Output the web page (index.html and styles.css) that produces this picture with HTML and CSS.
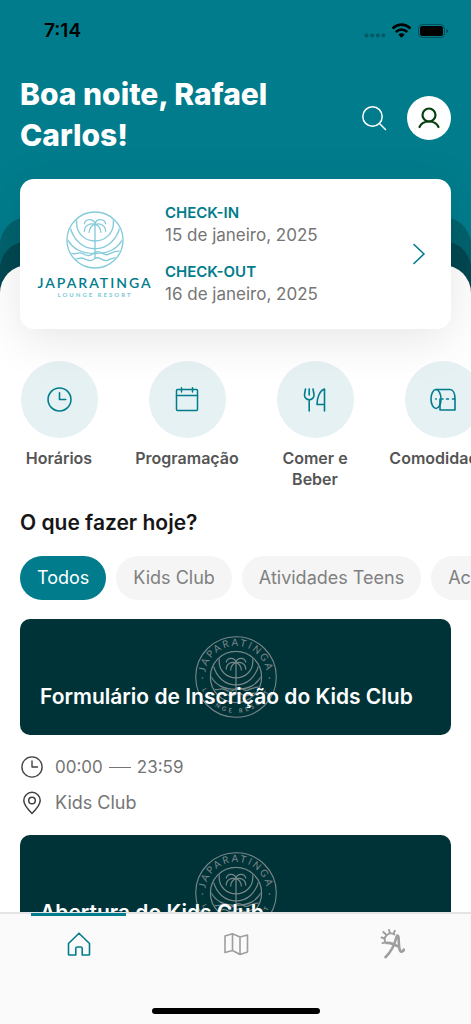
FILE: index.html
```html
<!DOCTYPE html>
<html lang="pt-BR">
<head>
<meta charset="utf-8">
<meta name="viewport" content="width=device-width, initial-scale=1">
<title>Japaratinga Lounge Resort</title>
<link rel="stylesheet" href="styles.css">
</head>
<body>
<svg class="defs" aria-hidden="true">
  <defs>
    <clipPath id="disc"><circle cx="30" cy="30" r="28"/></clipPath>
    <symbol id="palm" viewBox="0 0 60 60">
      <g fill="none" stroke="currentColor" stroke-width="1.4" stroke-linecap="round">
        <circle cx="30" cy="30" r="29"/>
        <path d="M30 12V49"/>
        <path d="M30 13C28 7 20 8 19 13M30 13C32 7 40 8 41 13M30 14C25 12 19 15 19 21M30 14C35 12 41 15 41 21M30 14C27 14 24 18 24 22M30 14C33 14 36 18 36 22"/>
        <g clip-path="url(#disc)">
          <path d="M11 6V13A19 18 0 0 0 49 13V6M4 16C8 31 18 39 30 39S52 31 56 16M0 27C7 40 16 44 30 44S53 40 60 27"/>
          <path d="M2 42C8 48 12 41 17 44S25 47 30 43C36 39 38 47 43 45S52 40 58 42M4 49C10 52 14 47 18 49S26 53 30 49C35 46 38 53 43 51S50 47 56 49"/>
        </g>
      </g>
    </symbol>
    <symbol id="clock" viewBox="0 0 24 24">
      <g fill="none" stroke="currentColor" stroke-width="1.5" stroke-linecap="round" stroke-linejoin="round"><circle cx="12" cy="12" r="11"/><path d="M12 5.500V12H18"/></g>
    </symbol>
    <symbol id="seal" viewBox="0 0 82 82">
      <circle cx="41" cy="41" r="40.300" fill="none" stroke="currentColor" stroke-width="1.100"/>
      <path id="seal-top" d="M10.400 46A31 31 0 1 1 71.600 46" fill="none"/>
      <path id="seal-bottom" d="M5 41A36 36 0 0 0 77 41" fill="none"/>
      <use href="#palm" x="14.500" y="14.500" width="53" height="53"/>
      <text class="seal-text" text-anchor="middle"><textPath href="#seal-top" startOffset="50%">JAPARATINGA</textPath></text>
      <text class="seal-text seal-text-small" text-anchor="middle"><textPath href="#seal-bottom" startOffset="50%">LOUNGE RESORT</textPath></text>
      <circle cx="7.500" cy="42" r=".8" fill="currentColor"/><circle cx="74.500" cy="42" r=".8" fill="currentColor"/>
    </symbol>
  </defs>
</svg>
<div class="app">
  <main class="content">
    <section class="hero">
      <div class="status">
        <span class="status-time">7:14</span>
        <svg class="status-icons" width="86" height="18" viewBox="0 0 86 18" aria-hidden="true">
          <g fill="#000" fill-opacity=".28"><circle cx="3.500" cy="13.500" r="2"/><circle cx="9.200" cy="13.500" r="2"/><circle cx="14.800" cy="13.500" r="2"/><circle cx="20.400" cy="13.500" r="2"/></g>
          <g fill="none" stroke="#000" stroke-width="2.600"><path d="M29.500 6.500Q38.500-1.200 47.500 6.500M32.800 10Q38.500 5 44.200 10"/></g>
          <path d="M38.500 15.800L35.400 12.700Q38.500 10 41.600 12.700Z"/>
          <rect x="55.500" y="2.500" width="26" height="13" rx="4" fill="none" stroke="#000" stroke-opacity=".35"/>
          <rect x="57" y="4" width="23" height="10" rx="2.500"/>
          <path d="M83.500 7v4q1.500-.5 1.500-2t-1.500-2" fill-opacity=".45"/>
        </svg>
      </div>
      <header class="header">
        <h1 class="greeting">Boa noite, Rafael Carlos!</h1>
        <button class="search" type="button" aria-label="Buscar">
          <svg width="26" height="26" viewBox="0 0 26 26" fill="none" stroke="currentColor" stroke-width="1.500" stroke-linecap="round"><circle cx="11.500" cy="11.500" r="9.700"/><path d="M18.500 18.500L24.500 24.500"/></svg>
        </button>
        <button class="profile" type="button" aria-label="Perfil">
          <svg width="24" height="24" viewBox="0 0 24 24" fill="none" stroke="currentColor" stroke-width="2.200" stroke-linecap="round"><circle cx="12" cy="9" r="6.500"/><path d="M2.500 21C4 17.500 7.500 15.500 12 15.500S20 17.500 21.500 21"/></svg>
        </button>
      </header>
      <a class="stay" href="#estadia">
        <span class="brand">
          <svg class="brand-mark" width="58" height="58" aria-hidden="true"><use href="#palm"/></svg>
          <span class="brand-name">JAPARATINGA</span>
          <span class="brand-tag">LOUNGE RESORT</span>
        </span>
        <span class="dates">
          <span class="date"><b class="date-label">CHECK-IN</b><span class="date-value">15 de janeiro, 2025</span></span>
          <span class="date"><b class="date-label">CHECK-OUT</b><span class="date-value">16 de janeiro, 2025</span></span>
        </span>
        <svg class="chevron" width="12" height="22" viewBox="0 0 12 22" fill="none" stroke="currentColor" stroke-width="1.600" stroke-linecap="round" stroke-linejoin="round" aria-hidden="true"><path d="M1 1.500L11 11L1 20.500"/></svg>
      </a>
      <div class="wave wave-mid"><div class="wave wave-deep"><div class="sheet">
        <nav class="shortcuts" aria-label="Atalhos">
          <a class="shortcut" href="#horarios"><span class="bubble"><svg width="25" height="25"><use href="#clock"/></svg></span><span class="shortcut-label">Horários</span></a>
          <a class="shortcut" href="#programacao"><span class="bubble"><svg width="24" height="26" viewBox="0 0 24 26" fill="none" stroke="currentColor" stroke-width="1.500" stroke-linecap="round" stroke-linejoin="round"><rect x="1.500" y="2.500" width="21" height="21" rx="1"/><path d="M1.500 8.500H22.500M6.500 .8V5M17.500 .8V5"/></svg></span><span class="shortcut-label">Programação</span></a>
          <a class="shortcut" href="#comer"><span class="bubble"><svg width="24" height="26" viewBox="0 0 24 26" fill="none" stroke="currentColor" stroke-width="1.600" stroke-linecap="round" stroke-linejoin="round"><path d="M2.500 2L1.500 7.500C1 14.500 11.500 14.500 11 7.500L10 2M6.200 2V8M6.200 13V24M21.500 24V2C17 3.500 14 10 14 17.500H21.500"/></svg></span><span class="shortcut-label">Comer e Beber</span></a>
          <a class="shortcut" href="#comodidades"><span class="bubble"><svg width="28" height="26" viewBox="0 0 28 26" fill="none" stroke="currentColor" stroke-width="1.600" stroke-linecap="round" stroke-linejoin="round"><ellipse cx="7" cy="12" rx="5" ry="9.500"/><path d="M7 2.500H21C24 2.500 26 6.500 26 12V23H11V12M13 12H14M17.500 12H19.500M23.500 12H26M7 11.800V12.200"/></svg></span><span class="shortcut-label">Comodidades</span></a>
        </nav>
        <section class="today">
          <h2 class="today-title">O que fazer hoje?</h2>
          <div class="chips">
            <button class="chip chip-active" type="button">Todos</button>
            <button class="chip" type="button">Kids Club</button>
            <button class="chip" type="button">Atividades Teens</button>
            <button class="chip" type="button">Academia</button>
          </div>
          <div class="events">
            <article class="event">
              <div class="banner"><svg class="seal" width="82" height="82" aria-hidden="true"><use href="#seal"/></svg><h3 class="banner-title">Formulário de Inscrição do Kids Club</h3></div>
              <div class="meta"><svg width="24" height="22" aria-hidden="true"><use href="#clock"/></svg><span class="hours">00:00 <i class="dash"></i> 23:59</span></div>
              <div class="meta"><svg width="24" height="24" viewBox="0 0 24 24" fill="none" stroke="currentColor" stroke-width="1.500" stroke-linejoin="round" aria-hidden="true"><path d="M12 22.500C8 18.500 3.800 14 3.800 9.500A8.200 8.200 0 0 1 20.200 9.500C20.200 14 16 18.500 12 22.500Z"/><circle cx="12" cy="9.500" r="3.300"/></svg><span>Kids Club</span></div>
            </article>
            <article class="event">
              <div class="banner"><svg class="seal" width="82" height="82" aria-hidden="true"><use href="#seal"/></svg><h3 class="banner-title">Abertura do Kids Club</h3></div>
            </article>
          </div>
        </section>
      </div></div></div>
    </section>
  </main>
  <nav class="tabs" aria-label="Principal">
    <a class="tab tab-active" href="#inicio" aria-label="Início"><svg width="24" height="24" viewBox="0 0 24 24" fill="none" stroke="currentColor" stroke-width="1.600" stroke-linejoin="round"><path d="M12 1.200L22.500 11.500V22.200Q22.500 23 21.700 23H15.200V16.500Q15.200 15 13.700 15H10.300Q8.800 15 8.800 16.500V23H2.300Q1.500 23 1.500 22.200V11.500Z"/></svg></a>
    <a class="tab" href="#mapa" aria-label="Mapa"><svg width="26" height="24" viewBox="0 0 26 24" fill="none" stroke="currentColor" stroke-width="1.600" stroke-linejoin="round"><path d="M2 4L9.500 1.800L17 5L24.500 3V20L17 22.500L9.500 18.500L2 20.500ZM9.500 1.800V18.500M17 5V22.500"/></svg></a>
    <a class="tab" href="#amarante" aria-label="Amarante"><svg width="26" height="30" viewBox="0 0 26 30" fill="none" stroke="currentColor" stroke-linecap="round" stroke-linejoin="round"><path stroke-width="2.600" d="M5.500 28.200C11 23 15 14 16.500 8Q17.600 5 18.500 8C19 13 18.500 24 22 22.500Q24 22 23.700 20.500M6.500 14C9 13.500 13 14.500 19 18"/><path stroke-width="1.900" d="M5.500 13.500C2.500 7.500 9 2.200 14.500 5.500M5 13.500L2.500 14.200M4.800 9.500L1.500 8.500M6.500 6L3.300 3M10 4.300L9 1M13.500 4.800L14.800 1.800"/></svg></a>
    <span class="home-bar"></span>
  </nav>
</div>
</body>
</html>
```
FILE: styles.css
```css
* { box-sizing: border-box; }
body { margin: 0; font-family: Inter, "Noto Sans", sans-serif; color: #757575; background: #fff; }
a { color: inherit; text-decoration: none; }
button { border: 0; padding: 0; background: none; font: inherit; color: inherit; cursor: pointer; }
svg { display: block; flex: none; }
h1, h2, h3 { margin: 0; }
.defs { position: absolute; width: 0; height: 0; }

.app { display: flex; flex-direction: column; height: 100vh; overflow: hidden; }
.content { flex: 1; min-height: 0; overflow: hidden auto; scrollbar-width: none; }

.hero { background: #007c8c; }
.status { display: flex; align-items: center; justify-content: space-between; height: 60px; padding: 2px 22px 0 44px; }
.status-time { color: #000; font-size: 19px; font-weight: 600; line-height: 24px; }
.header { display: flex; align-items: center; padding: 14px 20px 18px; }
.greeting { flex: 1; padding: 0 72px 5px 0; color: #fff; font-size: 30px; font-weight: 800; line-height: 41px; }
.search { color: #fff; margin-right: 20px; }
.profile { display: grid; place-items: center; width: 44px; height: 44px; border-radius: 50%; background: #fff; color: #06400f; }

.stay { position: relative; z-index: 1; display: flex; align-items: center; min-height: 150px; margin: 0 20px -112px; padding: 0 26px 0 18px; border-radius: 14px; background: #fff; box-shadow: 0 10px 48px rgba(0, 0, 0, .1); }
.brand { display: flex; flex-direction: column; align-items: center; width: 114px; margin-right: 13px; }
.brand-mark { color: #85cbd9; }
.brand-name { margin-top: 5px; color: #007c8c; font-family: Lato, sans-serif; font-size: 14px; font-weight: 600; line-height: 18px; letter-spacing: 2px; }
.brand-tag { color: #85cbd9; font-family: Lato, sans-serif; font-size: 6px; font-weight: 900; line-height: 6px; letter-spacing: 2px; }
.dates { display: flex; flex: 1; flex-direction: column; gap: 15px; padding-bottom: 1px; }
.date { display: flex; flex-direction: column; }
.date-label { color: #007c8c; font-size: 15px; font-weight: 600; line-height: 22px; }
.date-value { font-size: 17px; line-height: 22px; }
.chevron { color: #007c8c; }

.wave { padding-top: 24px; border-radius: 28px 28px 0 0; }
.wave-mid { background: #00626d; }
.wave-deep { background: #004751; }
.sheet { padding: 96px 0 20px; border-radius: 28px 28px 0 0; background: #fff; }

.shortcuts { display: flex; gap: 10px; overflow: hidden; }
.shortcut { display: flex; flex: none; flex-direction: column; align-items: center; gap: 10px; width: 118px; color: #555; font-size: 16px; font-weight: 600; line-height: 21px; text-align: center; }
.bubble { display: grid; place-items: center; width: 77px; height: 77px; border-radius: 50%; background: #e5f1f3; color: #007c8c; }
.shortcut-label { max-width: 108px; }

.today { padding: 20px 0 0 20px; }
.today-title { color: #161616; font-size: 21px; font-weight: 600; line-height: 26px; }
.chips { display: flex; gap: 10px; margin-top: 20px; overflow: hidden; }
.chip { flex: none; padding: 0 17px; border-radius: 22px; background: #f5f5f5; color: #808080; font-size: 18px; line-height: 44px; }
.chip-active { background: #007c8c; color: #fff; }

.events { display: flex; flex-direction: column; gap: 20px; margin-top: 19px; padding-right: 20px; }
.event { display: flex; flex-direction: column; gap: 12px; }
.banner { position: relative; display: flex; align-items: flex-end; min-height: 116px; margin-bottom: 8px; padding: 20px 20px 25px; border-radius: 10px; background: #003338; }
.seal { position: absolute; top: 50%; left: 50%; transform: translate(-50%, -50%); color: #788688; }
.seal-text { fill: currentColor; font-family: Lato, sans-serif; font-size: 10px; letter-spacing: 2px; }
.seal-text-small { font-size: 6px; font-weight: 700; letter-spacing: 3px; }
.banner-title { position: relative; color: #fff; font-size: 21px; font-weight: 600; line-height: 26px; }
.meta { display: flex; align-items: center; gap: 11px; font-size: 18px; line-height: 24px; }
.meta svg { color: #404040; }
.hours { display: flex; align-items: center; gap: 6px; font-size: 17px; }
.dash { width: 22px; height: 1px; background: #757575; }

.tabs { position: relative; display: grid; grid-template-columns: repeat(3, 1fr); flex: none; height: 112px; border-top: 2px solid #e4e4e4; background: #fafafa; }
.tab { position: relative; display: flex; align-items: center; justify-content: center; height: 60px; color: #9e9e9e; }
.tab-active { color: #007c8c; }
.tab-active::before { content: ""; position: absolute; top: -1px; left: 20%; width: 60%; height: 3px; background: currentColor; }
.home-bar { position: absolute; bottom: 10px; left: 50%; width: 168px; height: 6px; border-radius: 3px; background: #000; transform: translateX(-50%); }
```
